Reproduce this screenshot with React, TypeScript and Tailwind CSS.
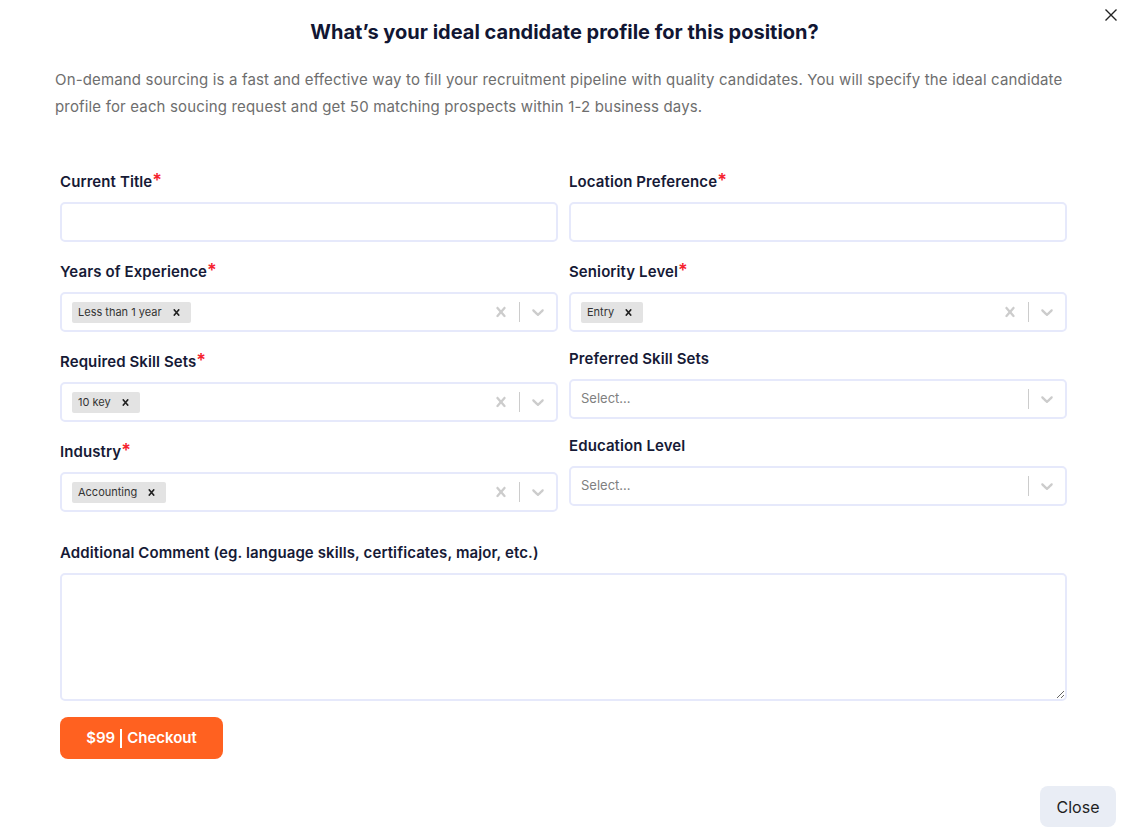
import React from "react";

type Opt = { label: string; required?: boolean; chip?: string; kind: "input" | "select" };

const left: Opt[] = [
    { label: "Current Title", required: true, kind: "input" },
    { label: "Years of Experience", required: true, kind: "select", chip: "Less than 1 year" },
    { label: "Required Skill Sets", required: true, kind: "select", chip: "10 key" },
    { label: "Industry", required: true, kind: "select", chip: "Accounting" },
];

const right: Opt[] = [
    { label: "Location Preference", required: true, kind: "input" },
    { label: "Seniority Level", required: true, kind: "select", chip: "Entry" },
    { label: "Preferred Skill Sets", kind: "select" },
    { label: "Education Level", kind: "select" },
];

function Label({ text, required }: { text: string; required?: boolean }) {
    return (
        <label
            className={
                "block h-[21px] text-[15px] font-semibold leading-[21px] tracking-[0.1px] text-[#161a36] box-content " +
                (required ? "pt-[3px]" : "")
            }
        >
            {text}
            {required && <span className="text-[18px] leading-none text-[#f5222d]">*</span>}
        </label>
    );
}

function SmallX({ className }: { className?: string }) {
    return (
        <svg viewBox="0 0 20 20" className={className} fill="currentColor">
            <path d="M14.348 14.849c-0.469 0.469-1.229 0.469-1.697 0l-2.651-3.030-2.651 3.029c-0.469 0.469-1.229 0.469-1.697 0-0.469-0.469-0.469-1.229 0-1.697l2.758-3.15-2.759-3.152c-0.469-0.469-0.469-1.228 0-1.697s1.228-0.469 1.697 0l2.652 3.031 2.651-3.031c0.469-0.469 1.228-0.469 1.697 0s0.469 1.229 0 1.697l-2.758 3.152 2.758 3.15c0.469 0.469 0.469 1.229 0 1.698z" />
        </svg>
    );
}

function Chevron() {
    return (
        <svg viewBox="0 0 20 20" className="h-[20px] w-[20px] text-[#cccccc]" fill="currentColor">
            <path d="M4.516 7.548c0.436-0.446 1.043-0.481 1.576 0l3.908 3.747 3.908-3.747c0.533-0.481 1.141-0.446 1.574 0 0.436 0.445 0.408 1.197 0 1.615-0.406 0.418-4.695 4.502-4.695 4.502-0.217 0.223-0.502 0.335-0.787 0.335s-0.57-0.112-0.789-0.335c0 0-4.287-4.084-4.695-4.502s-0.436-1.17 0-1.615z" />
        </svg>
    );
}

function Field({ opt }: { opt: Opt }) {
    return (
        <div className="flex flex-col">
            <Label text={opt.label} required={opt.required} />
            {opt.kind === "input" ? (
                <input className="mt-[10px] h-[40px] w-full rounded-[5px] border-2 border-[#e6e9fb] bg-white px-3 outline-none" />
            ) : (
                <div className="mt-[10px] flex h-[40px] w-full items-center rounded-[5px] border-2 border-[#e6e9fb] bg-white">
                    <div className="flex flex-1 items-center pl-[10px]">
                        {opt.chip ? (
                            <span className="flex h-[21px] items-center rounded-[2px] bg-[#e3e3e3] pl-[6px] text-[11px] text-[#333333]">
                                {opt.chip}
                                <span className="flex h-full items-center px-[8px]">
                                    <SmallX className="h-[13px] w-[13px] text-[#222]" />
                                </span>
                            </span>
                        ) : (
                            <span className="text-[13px] text-[#808080]">Select...</span>
                        )}
                    </div>
                    {opt.chip && (
                        <span className="flex items-center px-[8px]">
                            <SmallX className="h-[20px] w-[20px] text-[#cccccc]" />
                        </span>
                    )}
                    <span className="h-[20px] w-px bg-[#cccccc]" />
                    <span className="flex items-center px-[8px]">
                        <Chevron />
                    </span>
                </div>
            )}
        </div>
    );
}

export default function App() {
    return (
        <div className="relative min-h-[830px] w-full bg-white font-['Inter',sans-serif]">
            <button className="absolute right-[10px] top-[7px] text-[#222]">
                <svg viewBox="0 0 16 16" className="h-[16px] w-[16px]" fill="none" stroke="currentColor" strokeWidth={1.4}>
                    <path d="M2.5 2.5l11 11M13.5 2.5l-11 11" />
                </svg>
            </button>

            <h1 className="pt-[20px] text-center text-[20px] font-bold leading-[24px] text-[#111633]">
                What’s your ideal candidate profile for this position?
            </h1>

            <p className="mt-[22px] pl-[55px] pr-[50px] text-[15px] leading-[27px] tracking-[0.16px] text-[#6e6e6e]">
                On-demand sourcing is a fast and effective way to fill your recruitment pipeline with quality candidates. You will specify the ideal candidate profile for each soucing request and get 50 matching prospects within 1-2 business days.
            </p>

            <div className="mt-[48px] pl-[60px] pr-[62px]">
                <div className="grid grid-cols-2 gap-x-[11px]">
                    <div className="flex flex-col gap-[16px]">
                        {left.map((o) => (
                            <Field key={o.label} opt={o} />
                        ))}
                    </div>
                    <div className="flex flex-col gap-[16px]">
                        {right.map((o) => (
                            <Field key={o.label} opt={o} />
                        ))}
                    </div>
                </div>

                <div className="mt-[30px]">
                    <Label text="Additional Comment (eg. language skills, certificates, major, etc.)" />
                    <textarea className="mt-[10px] block h-[128px] w-full rounded-[5px] border-2 border-[#e6e9fb] bg-white p-3 outline-none" />
                </div>

                <button className="mt-[16px] flex h-[42px] w-[163px] items-center justify-center rounded-[8px] bg-[#ff6120] text-[15px] font-semibold text-white">
                    $99
                    <span className="mx-[5px] h-[19px] w-[2px] bg-white" />
                    Checkout
                </button>
            </div>

            <div className="mt-[27px] flex justify-end pr-[13px] pb-[4px]">
                <button className="h-[41px] w-[76px] rounded-[8px] bg-[#e9edf5] text-[16px] text-[#1f1f1f]">Close</button>
            </div>
        </div>
    );
}
